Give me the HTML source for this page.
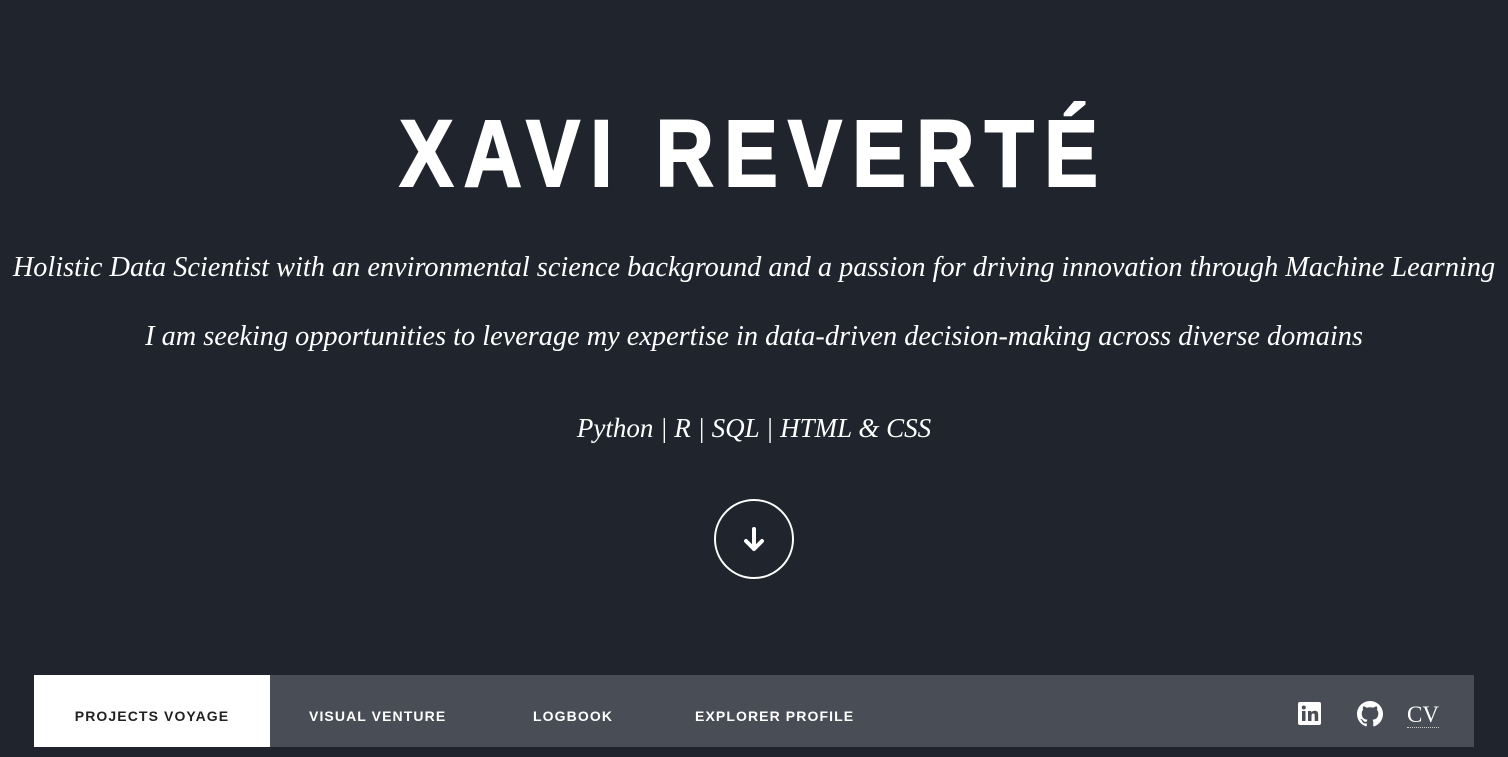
<!DOCTYPE html>
<html><head><meta charset="utf-8"><style>
html,body{margin:0;padding:0;}
body{width:1508px;height:747px;overflow:hidden;background:#20252d;color:#fff;font-family:"Liberation Serif",serif;position:relative;}
h1{position:absolute;top:104px;left:-6px;width:1508px;text-align:center;margin:0;font-family:"Liberation Sans",sans-serif;font-weight:bold;font-size:95px;line-height:100px;}
h1 span{display:inline-block;letter-spacing:12px;transform:scaleX(0.85);margin-right:-12px;-webkit-text-stroke:2px #fff;}
.p{position:absolute;left:0;width:1508px;text-align:center;font-style:italic;font-size:28.3px;white-space:nowrap;}
.circle{position:absolute;left:714px;top:499px;width:76px;height:76px;border:2px solid #fff;border-radius:50%;}
nav{position:absolute;left:34px;top:675px;width:1440px;height:72px;background:#494d55;font-family:"Liberation Sans",sans-serif;font-weight:bold;font-size:14px;letter-spacing:1.1px;}
nav .t{position:absolute;top:0;height:72px;line-height:82px;}
nav .a{left:0;width:236px;background:#fff;color:#222;text-align:center;}
</style></head><body>
<h1><span>XAVI REVERTÉ</span></h1>
<div class="p" style="top:252px">Holistic Data Scientist with an environmental science background and a passion for driving innovation through Machine Learning</div>
<div class="p" style="top:321px">I am seeking opportunities to leverage my expertise in data-driven decision-making across diverse domains</div>
<div class="p" style="top:413px;font-size:27px">Python | R | SQL | HTML &amp; CSS</div>
<div class="circle"><svg width="76" height="76" viewBox="0 0 76 76"><path d="M38 28v20M30 40l8 8 8-8" stroke="#fff" stroke-width="4" fill="none" stroke-linecap="round" stroke-linejoin="round"/></svg></div>
<nav>
<div class="t a">PROJECTS VOYAGE</div>
<div class="t" style="left:275px">VISUAL VENTURE</div>
<div class="t" style="left:499px">LOGBOOK</div>
<div class="t" style="left:661px">EXPLORER PROFILE</div>
<svg style="position:absolute;left:1264px;top:27px" width="23" height="23" viewBox="0 0 23 23"><rect width="23" height="23" rx="2" fill="#fff"/><rect x="4" y="9" width="3.5" height="10" fill="#494d55"/><circle cx="5.75" cy="5.5" r="2" fill="#494d55"/><path d="M10 9h3.3v1.6c.6-1.1 1.8-1.9 3.6-1.9 2.8 0 3.3 1.8 3.3 4.2V19h-3.5v-5.3c0-1.3-.2-2.2-1.4-2.2s-1.8.9-1.8 2.3V19H10z" fill="#494d55"/></svg>
<svg style="position:absolute;left:1323px;top:26px" width="26" height="26" viewBox="0 0 16 16"><path fill="#fff" d="M8 0C3.580 0 0 3.580 0 8c0 3.540 2.290 6.530 5.470 7.590.4.07.55-.17.55-.38 0-.19-.01-.82-.01-1.490-2.010.37-2.530-.49-2.690-.94-.09-.23-.48-.94-.82-1.130-.28-.15-.68-.52-.01-.53.63-.01 1.080.58 1.230.82.72 1.210 1.870.87 2.330.66.07-.52.28-.87.51-1.070-1.780-.2-3.640-.89-3.640-3.950 0-.87.31-1.590.82-2.150-.08-.2-.36-1.020.08-2.120 0 0 .67-.21 2.200.82.64-.18 1.320-.27 2-.27s1.360.09 2 .27c1.530-1.040 2.200-.82 2.200-.82.44 1.100.16 1.920.08 2.120.51.56.82 1.270.82 2.150 0 3.070-1.870 3.750-3.650 3.950.29.25.54.73.54 1.480 0 1.070-.01 1.930-.01 2.200 0 .21.15.46.55.38A8.013 8.013 0 0016 8c0-4.420-3.580-8-8-8z"/></svg>
<div style="position:absolute;left:1373px;top:27px;font-family:'Liberation Serif',serif;font-weight:normal;font-size:23px;letter-spacing:0;color:#fff;border-bottom:1px dotted #ccc;line-height:25px;">CV</div>
</nav>
</body></html>
